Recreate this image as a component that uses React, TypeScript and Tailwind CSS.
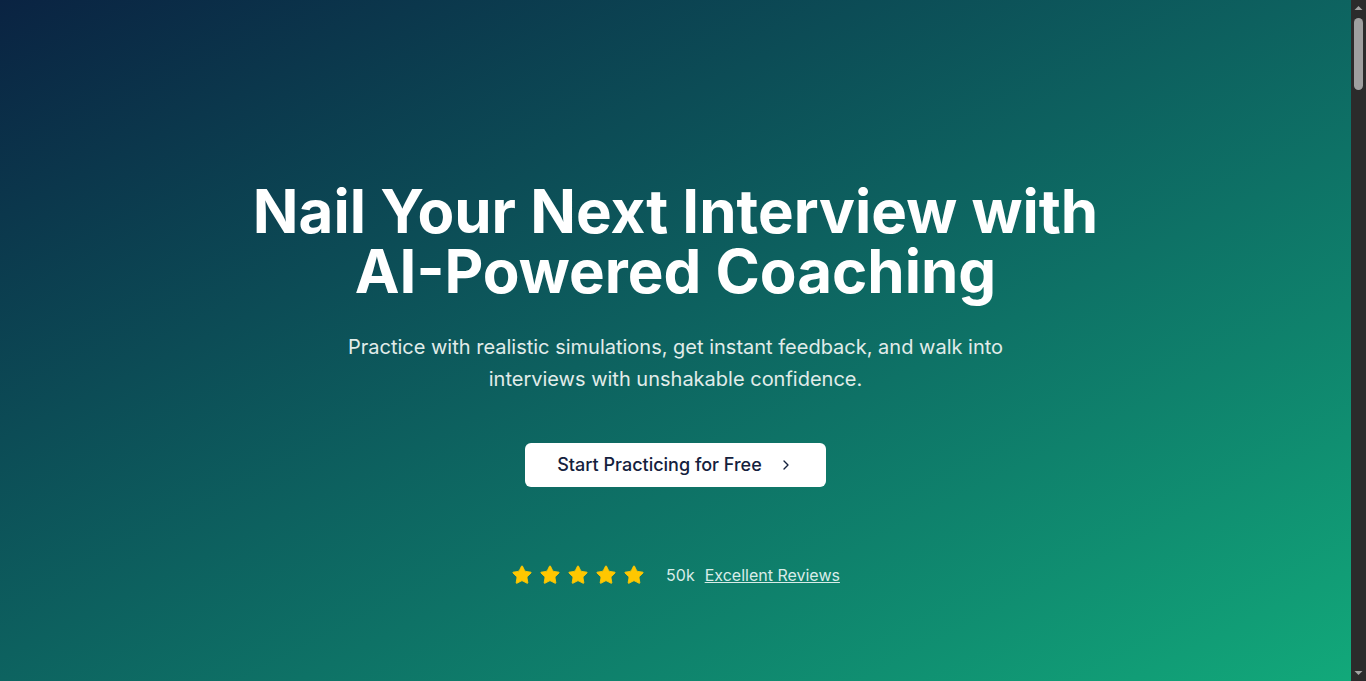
import { ChevronRight, Star } from 'lucide-react';

function Scrollbar() {
  return (
    <div className="flex h-screen w-[15px] shrink-0 flex-col items-center bg-[#2b2b2b]">
      <svg width="15" height="15" viewBox="0 0 15 15" className="shrink-0">
        <path d="M3.5 10 L7.5 6 L11.5 10 Z" fill="#a3a3a3" />
      </svg>
      <div className="mt-[3px] h-[72px] w-[9px] rounded-full bg-[#9f9f9f]" />
      <div className="flex-1" />
      <svg width="15" height="15" viewBox="0 0 15 15" className="shrink-0">
        <path d="M3.5 5 L7.5 9 L11.5 5 Z" fill="#a3a3a3" />
      </svg>
    </div>
  );
}

export default function App() {
  return (
    <div className="flex h-screen overflow-hidden font-['Inter',sans-serif]">
      <main className="min-w-0 flex-1">
        {/* Hero */}
        <section className="min-h-[681px] bg-linear-to-br from-[#0a2342] to-[#12a97a] px-6 pt-[181px] pb-24 text-center">
          <div className="mx-auto flex max-w-4xl flex-col items-center">
            <h1 className="text-6xl leading-none font-bold text-white">
              Nail Your Next Interview with AI-Powered Coaching
            </h1>
            <p className="mt-[30px] max-w-2xl text-xl leading-8 text-[#e1ecea]">
              Practice with realistic simulations, get instant feedback, and walk into interviews with unshakable
              confidence.
            </p>
            <button className="mt-12 flex h-11 items-center gap-4 rounded-md bg-white px-8 text-lg font-medium text-[#14213d]">
              Start Practicing for Free
              <ChevronRight className="h-4 w-4" strokeWidth={2} />
            </button>
            <div className="mt-[76px] flex items-center">
              <div className="flex gap-1.5">
                {[0, 1, 2, 3, 4].map((i) => (
                  <Star key={i} className="h-[22px] w-[22px] fill-[#ffc700] text-[#ffc700]" strokeWidth={1} />
                ))}
              </div>
              <span className="ml-[21px] text-base text-[#d9ece8]">50k</span>
              <a href="#" className="ml-2.5 text-base text-[#d9ece8] underline">
                Excellent Reviews
              </a>
            </div>
          </div>
        </section>
        {/* rest of page */}
        <section className="h-[5400px] bg-white" />
      </main>
      <Scrollbar />
    </div>
  );
}
